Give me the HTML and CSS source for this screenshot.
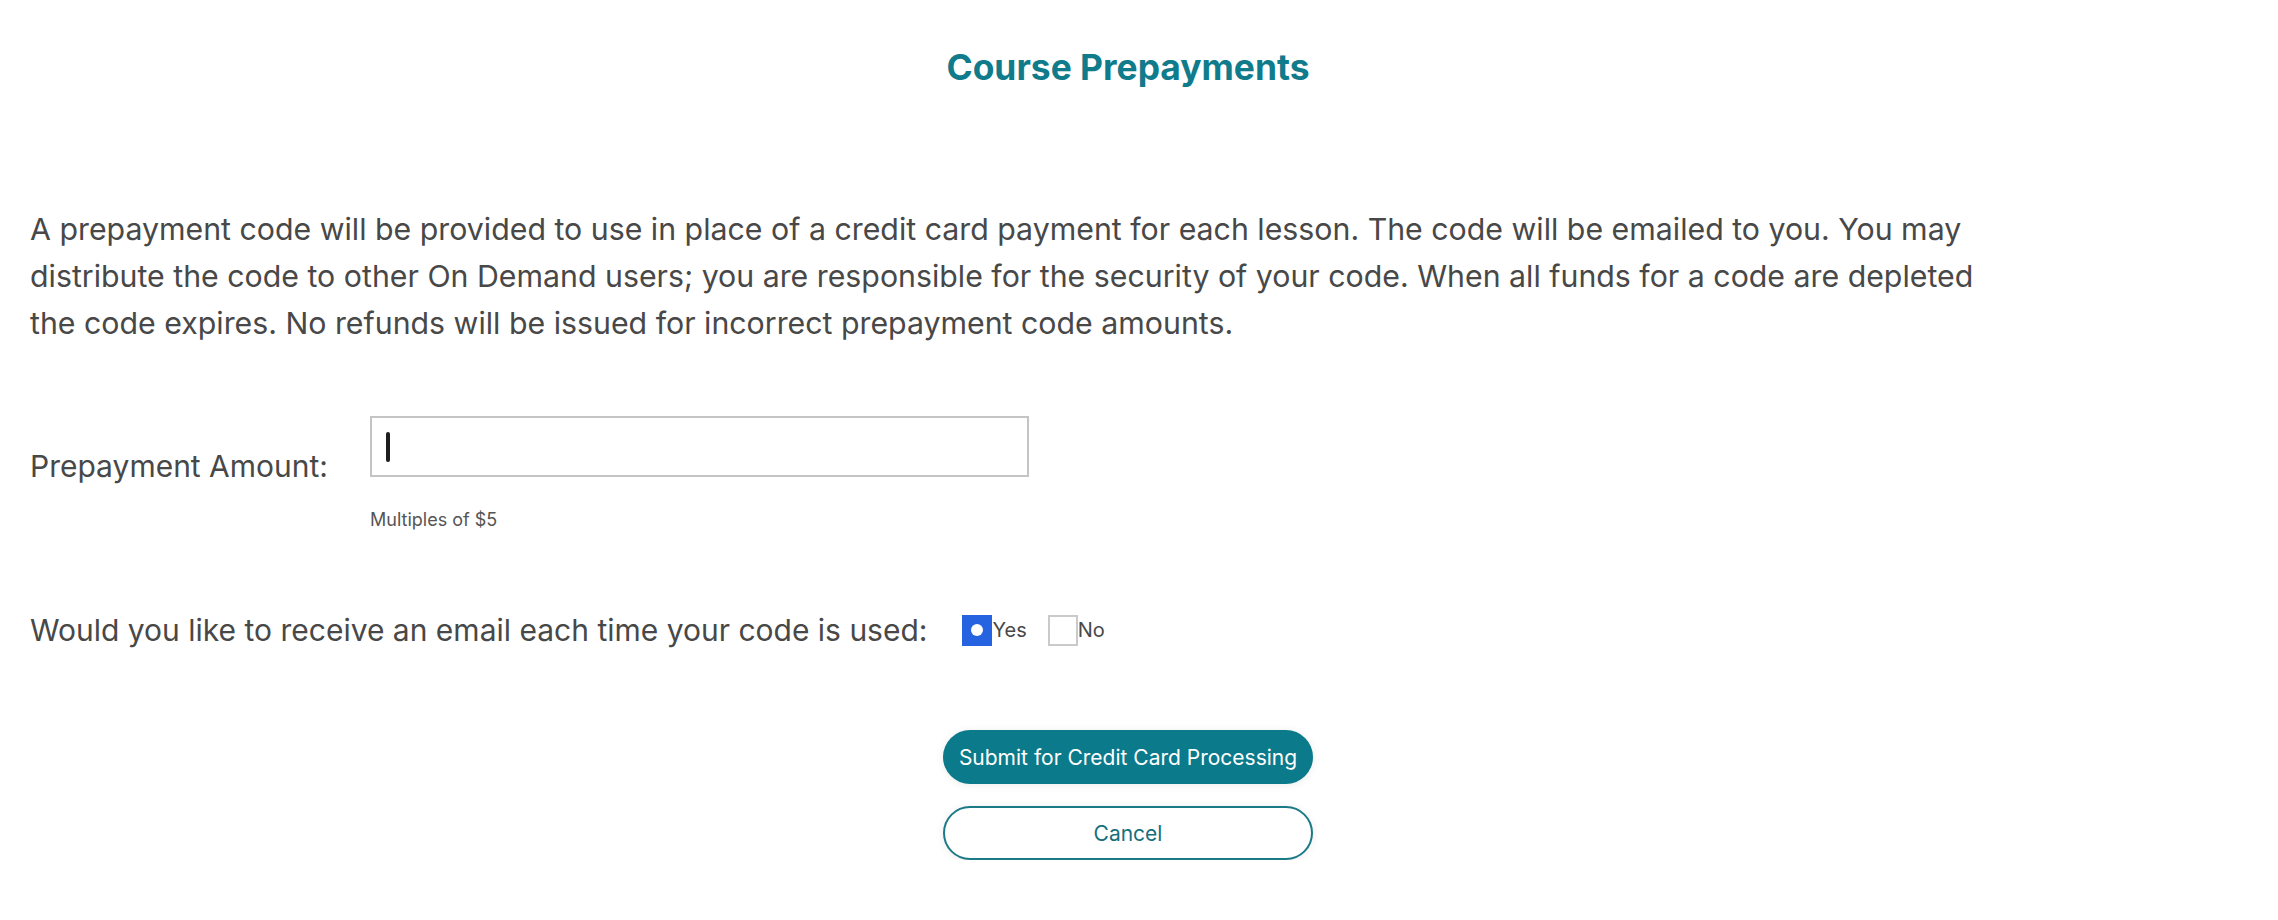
FILE: index.html
```html
<!DOCTYPE html>
<html lang="en">
<head>
  <meta charset="UTF-8">
  <meta name="viewport" content="width=device-width, initial-scale=1.0">
  <title>Course Prepayments</title>
  <link rel="stylesheet" href="styles.css">
</head>
<body>
  <div class="page">
    <h1 class="title">Course Prepayments</h1>

    <p class="intro">A prepayment code will be provided to use in place of a credit card payment for each lesson. The code will be emailed to you. You may distribute the code to other On Demand users; you are responsible for the security of your code. When all funds for a code are depleted the code expires. No refunds will be issued for incorrect prepayment code amounts.</p>

    <form id="prepay-form" class="prepay-form">
      <div class="field-row">
        <label class="field-label" for="amount">Prepayment Amount:</label>
        <div class="field-input">
          <div class="input-wrap">
            <input type="text" id="amount" name="amount" class="text-input">
            <span class="caret"></span>
          </div>
          <div class="hint">Multiples of $5</div>
        </div>
      </div>

      <div class="question-row">
        <span class="question">Would you like to receive an email each time your code is used:</span>
        <label class="choice"><span class="box box-checked"><span class="dot"></span></span>Yes</label>
        <label class="choice"><span class="box"></span>No</label>
      </div>

      <div class="actions">
        <button type="submit" class="btn btn-primary">Submit for Credit Card Processing</button>
        <button type="button" class="btn btn-outline">Cancel</button>
      </div>
    </form>
  </div>
</body>
</html>
```

FILE: styles.css
```css
body { margin: 0; background: #fff; font-family: Inter, "Liberation Sans", sans-serif; color: #484848; }
.page { padding: 0 52px 0 30px; }
.title { margin: 0; padding-top: 48px; text-align: center; font-size: 35.4px; font-weight: 700; line-height: 40px; color: #0f7b8b; }
.intro { max-width: 1965px; margin: 118px 0 0; font-size: 30.3px; line-height: 47px; }
.field-row { display: flex; align-items: flex-start; margin-top: 69px; }
.field-label { width: 340px; flex: none; padding-top: 32px; font-size: 30px; line-height: 36px; }
.input-wrap { position: relative; }
.text-input { display: block; box-sizing: border-box; width: 659px; height: 61px; border: 2px solid #c4c4c4; padding: 0 14px; font-size: 30px; font-family: inherit; color: #222; outline: none; }
.caret { position: absolute; left: 16px; top: 16px; width: 4px; height: 30px; border-radius: 2px; background: #1e1e1e; }
.hint { margin-top: 32px; font-size: 18px; color: #555; }
.question-row { display: flex; align-items: center; margin-top: 82px; }
.question { font-size: 30px; line-height: 36px; margin-right: 35px; }
.choice { display: flex; align-items: center; font-size: 20px; margin-right: 21px; }
.box { width: 30px; height: 31px; box-sizing: border-box; border: 2px solid #cacaca; background: #fff; display: flex; align-items: center; justify-content: center; }
.box-checked { background: #2563e0; border-color: #2563e0; }
.dot { width: 12px; height: 12px; border-radius: 50%; background: #fff; }
.actions { display: flex; flex-direction: column; align-items: center; gap: 22px; margin-top: 82px; }
.btn { width: 370px; height: 54px; border-radius: 27px; font-family: inherit; font-size: 21px; cursor: pointer; box-shadow: 0 1px 8px rgba(0,0,0,0.08); }
.btn-primary { background: #0b7a8a; color: #fff; border: none; }
.btn-outline { background: #fff; color: #176f7c; border: 2px solid #1a7a86; }
```
